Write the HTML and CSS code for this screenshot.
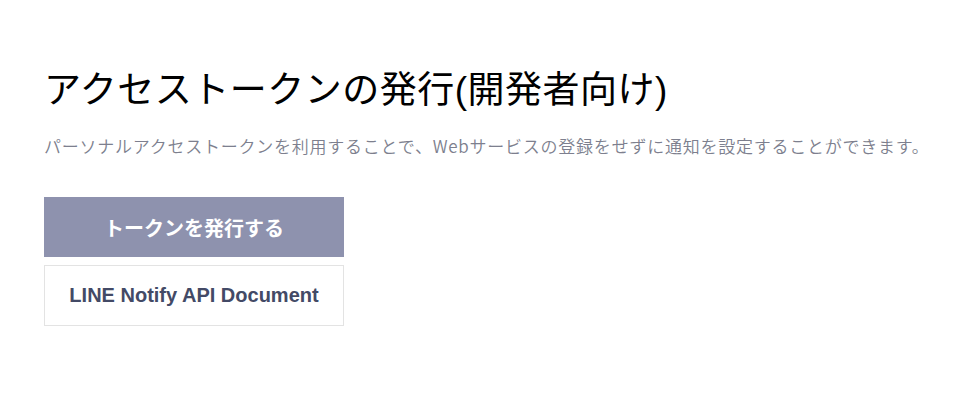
FILE: index.html
```html
<!DOCTYPE html>
<html lang="ja">
<head>
<meta charset="utf-8">
<link rel="stylesheet" href="styles.css">
</head>
<body>
<main class="page">
  <h1 class="title">アクセストークンの発行(開発者向け)</h1>
  <p class="desc">パーソナルアクセストークンを利用することで、Webサービスの登録をせずに通知を設定することができます。</p>
  <div class="actions">
    <button class="btn btn-primary" type="button">トークンを発行する</button>
    <a class="btn btn-secondary" href="#">LINE Notify API Document</a>
  </div>
</main>
</body>
</html>
```
FILE: styles.css
```css
html, body {
  margin: 0;
  padding: 0;
  background: #ffffff;
}
body {
  font-family: "Liberation Sans", "Noto Sans CJK JP", sans-serif;
}
.page {
  padding: 65px 44px 0 44px;
}
.title {
  margin: 0;
  font-size: 37px;
  font-weight: 400;
  line-height: 52px;
  color: #000000;
  letter-spacing: 0.5px;
}
.desc {
  margin: 17px 0 0 0;
  font-family: "Noto Sans CJK JP", sans-serif;
  font-size: 17px;
  font-weight: 350;
  line-height: 24px;
  color: #7d7f8e;
  letter-spacing: 0.76px;
}
.actions {
  margin-top: 39px;
  display: flex;
  flex-direction: column;
  gap: 8px;
  width: 300px;
}
.btn {
  display: flex;
  align-items: center;
  justify-content: center;
  box-sizing: border-box;
  width: 300px;
  font-family: "Liberation Sans", "Noto Sans CJK JP", sans-serif;
  font-weight: 700;
  text-decoration: none;
  cursor: pointer;
}
.btn-primary {
  height: 60px;
  border: none;
  background: #8e92ae;
  color: #ffffff;
  font-size: 20px;
}
.btn-secondary {
  height: 61px;
  border: 1px solid #e3e3e3;
  background: #ffffff;
  color: #434a66;
  font-size: 20px;
}
```
